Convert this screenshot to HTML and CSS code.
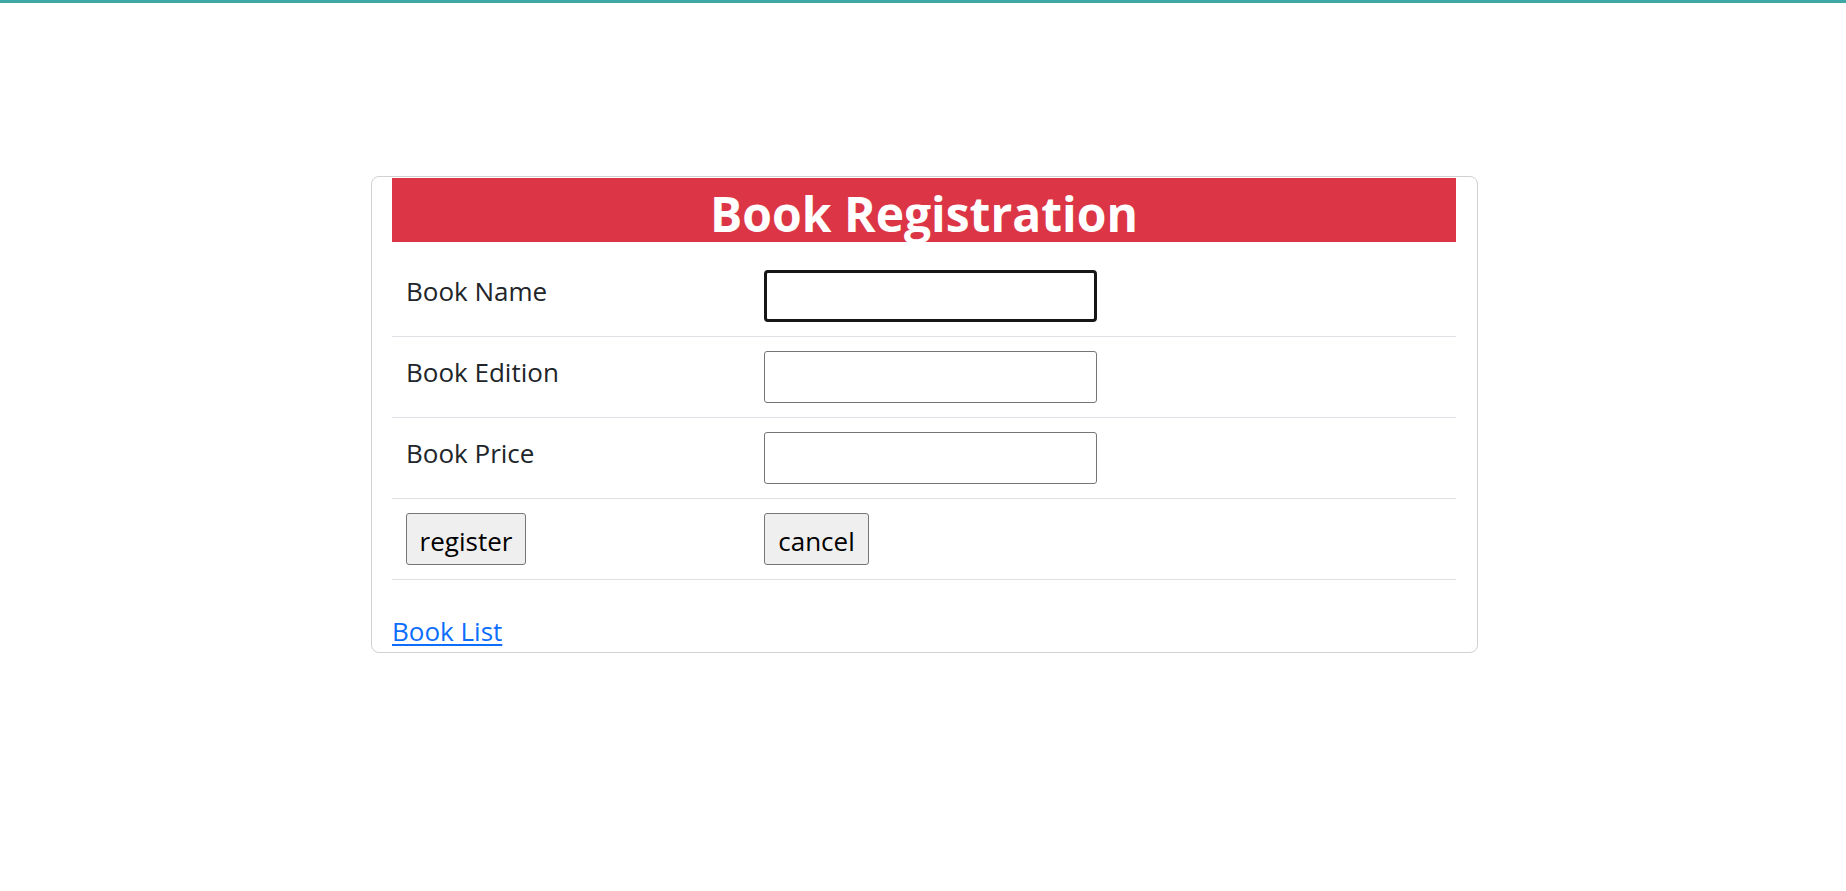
FILE: index.html
```html
<!DOCTYPE html>
<html lang="en">
<head>
<meta charset="utf-8">
<title>Book Registration</title>
<link rel="stylesheet" href="styles.css">
</head>
<body>
<div class="topline"></div>
<main class="page">
  <section class="card">
    <h1 class="card-title">Book Registration</h1>
    <table class="form-table">
      <colgroup>
        <col class="col-label">
        <col class="col-field">
      </colgroup>
      <tbody>
        <tr>
          <td><span class="label">Book Name</span></td>
          <td><input class="field field-focused" type="text"></td>
        </tr>
        <tr>
          <td><span class="label">Book Edition</span></td>
          <td><input class="field" type="text"></td>
        </tr>
        <tr>
          <td><span class="label">Book Price</span></td>
          <td><input class="field" type="text"></td>
        </tr>
        <tr>
          <td><button class="btn btn-register" type="button">register</button></td>
          <td><button class="btn btn-cancel" type="button">cancel</button></td>
        </tr>
      </tbody>
    </table>
    <a class="list-link" href="#">Book List</a>
  </section>
</main>
</body>
</html>
```
FILE: styles.css
```css
html, body {
  margin: 0;
  padding: 0;
  background: #ffffff;
}

body {
  font-family: "Open Sans", "Noto Sans", "Liberation Sans", sans-serif;
  font-size: 26px;
  color: #212529;
}

.topline {
  height: 3px;
  background: #3ea8a6;
}

.page {
  padding-top: 173px;
  padding-left: 371px;
}

.card {
  box-sizing: border-box;
  width: 1107px;
  border: 1px solid #d1d1d1;
  border-radius: 8px;
  padding: 1px 21px 0 20px;
  display: flex;
  flex-direction: column;
  align-items: flex-start;
}

.card-title {
  align-self: stretch;
  margin: 0;
  height: 64px;
  background: #dc3545;
  color: #ffffff;
  text-align: center;
  font-size: 48px;
  font-weight: 700;
  line-height: 64px;
  padding-top: 4px;
  box-sizing: border-box;
  overflow: visible;
}

.form-table {
  align-self: stretch;
  margin-top: 14px;
  margin-bottom: 31px;
  border-collapse: collapse;
  table-layout: fixed;
  width: 100%;
}

.col-label {
  width: 358px;
}

.form-table td {
  padding: 14px;
  border-bottom: 1px solid #dee2e6;
  vertical-align: top;
  height: 52px;
  line-height: 38px;
}

.label {
  display: inline-block;
  padding-top: 2px;
}

.field {
  box-sizing: border-box;
  display: block;
  width: 333px;
  height: 52px;
  margin: 0;
  border: 1px solid #767676;
  border-radius: 3px;
  background: #ffffff;
  font: inherit;
}

.field-focused {
  border: 3px solid #161616;
  border-radius: 4px;
}

.btn {
  box-sizing: border-box;
  display: block;
  height: 52px;
  margin: 0;
  padding: 3px 8px 0;
  border: 1px solid #767676;
  border-radius: 3px;
  background: #efefef;
  color: #000000;
  font: inherit;
  line-height: 46px;
}

.btn-register {
  width: 120px;
}

.btn-cancel {
  width: 105px;
}

.list-link {
  color: #0d6efd;
  text-decoration: underline;
  text-underline-offset: 3px;
  line-height: 41px;
}
```
